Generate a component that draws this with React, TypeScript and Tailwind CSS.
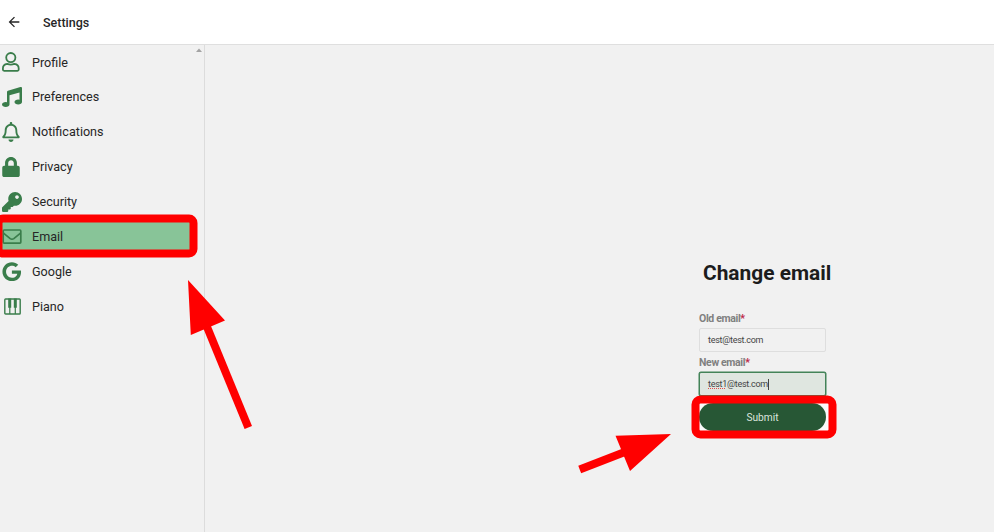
import React from "react";
import { FaMusic, FaRegBell, FaLock, FaKey, FaGoogle } from "react-icons/fa";
import { MdArrowBack } from "react-icons/md";

function User() {
  return (
    <svg width="20" height="20" viewBox="0 0 20 20" fill="none" stroke="currentColor" strokeWidth="1.8" strokeLinejoin="round">
      <circle cx="8.8" cy="5.6" r="4.6" />
      <path d="M5.2 11.9C2.6 12.2 0.9 14 0.9 16.5V17.6q0 1.2 1.2 1.2H15.5q1.2 0 1.2-1.2V16.5C16.7 14 15 12.2 12.4 11.9q-3.6 1.5-7.2 0z" />
    </svg>
  );
}

function Envelope() {
  return (
    <svg width="20" height="20" viewBox="0 0 20 20" fill="none" stroke="currentColor" strokeWidth="1.7" strokeLinejoin="round">
      <rect x="1.2" y="3" width="17.6" height="13.2" rx="0.9" />
      <path d="M1.5 6.2L8.2 11.6q1.8 1.3 3.6 0L18.5 6.2" />
    </svg>
  );
}

function Piano() {
  return (
    <svg width="20" height="20" viewBox="0 0 20 20" className="ml-[2px]">
      <rect x="0.8" y="2" width="15.4" height="15" rx="0.8" fill="none" stroke="currentColor" strokeWidth="1.4" />
      <path d="M4.2 1.5h3v9.3h-3zM9.8 1.5h3v9.3h-3z" fill="currentColor" />
      <path d="M5.8 10v7M11.3 10v7" stroke="currentColor" strokeWidth="1.2" />
    </svg>
  );
}

const items = [
  { label: "Profile", icon: <User /> },
  { label: "Preferences", icon: <FaMusic size={20} /> },
  { label: "Notifications", icon: <FaRegBell size={20} className="-ml-[1px]" /> },
  { label: "Privacy", icon: <FaLock size={20} className="-ml-[1px]" /> },
  { label: "Security", icon: <FaKey size={20} /> },
  { label: "Email", icon: <Envelope />, active: true },
  { label: "Google", icon: <FaGoogle size={19.5} /> },
  { label: "Piano", icon: <Piano /> },
];

function Label({ children }: { children: string }) {
  return (
    <label className="block h-[14px] whitespace-nowrap pt-px text-[10.5px] font-bold leading-[14px] tracking-[-0.35px] text-[#808080]">
      {children}
      <span className="text-[#bd2346]">*</span>
    </label>
  );
}

export default function App() {
  return (
    <div className="relative flex h-[532px] w-[994px] flex-col overflow-hidden bg-[#f1f1f1] font-[Roboto,sans-serif] text-[#262626]">
      <header className="flex h-[45px] shrink-0 items-center border-b border-[#dfdfdf] bg-white pl-[6px]">
        <MdArrowBack size={16} />
        <h1 className="ml-[21px] pt-[2px] text-[12.5px] font-medium">Settings</h1>
      </header>
      <div className="flex min-h-0 flex-1">
        <nav className="relative w-[205px] shrink-0 border-r border-[#dcdcdc]">
          {items.map((it) => (
            <div key={it.label} className="flex h-[34.95px] w-[190px] items-center">
              <div className={`flex h-[31px] w-full items-center pl-[2.4px] ${it.active ? "bg-[#88c498]" : ""}`}>
                <span className="-mt-px flex w-[29.6px] text-[#3a7d4b]">{it.icon}</span>
                <span className="pt-px text-[12.6px]">{it.label}</span>
              </div>
            </div>
          ))}
          <svg className="absolute right-[2px] top-[3px]" width="6" height="4" viewBox="0 0 6 4">
            <path d="M0 4L3 0.5l3 3.5z" fill="#a3a3a3" />
          </svg>
        </nav>
        <main className="flex-1 pl-[494px] pt-[215px]">
          <h2 className="ml-[4px] whitespace-nowrap pt-px text-[20.9px] font-bold leading-[25px] text-[#1c1c1c]">Change email</h2>
          <form className="mt-[25px] w-[127px]">
            <Label>Old email</Label>
            <div className="mt-[3px] flex h-[24px] items-center rounded-[2px] border border-[#dedede] pl-[8px] pt-px text-[9px] tracking-[-0.28px] text-[#444]">test@test.com</div>
            <div className="mt-[3px]"><Label>New email</Label></div>
            <div className="mt-[3px] flex h-[24px] items-center rounded-[2px] border border-[#438358] bg-[#dfe6e0] pl-[8px] pt-px text-[9px] tracking-[-0.28px] text-[#444] ring-[0.5px] ring-[#438358]">
              <span className="underline decoration-[#e34b4b] decoration-dotted decoration-[1px] underline-offset-[1px]">test1</span>
              <span>@test.com</span>
              <span className="h-[11px] w-px bg-[#444]" />
            </div>
            <div className="-mx-[3px] mt-[7px] bg-[#fafafa] px-[3px]">
              <button type="button" className="block h-[28px] w-full rounded-full bg-[#275735] pt-[2px] text-[10.2px] text-[#dce5de]">Submit</button>
            </div>
          </form>
        </main>
      </div>
      <svg className="pointer-events-none absolute inset-0" width="994" height="532" viewBox="0 0 994 532">
        <g fill="none" stroke="#f00" strokeWidth="8">
          <rect x="-1.5" y="218.5" width="195" height="35" rx="4.5" />
          <rect x="695.5" y="399.5" width="137" height="35" rx="5" />
          <path d="M205 322L248.3 427.5" />
          <path d="M579.7 469.5L630 450" />
        </g>
        <path fill="#f00" d="M188 280L225 320.5L190.8 335zM671 434L615.5 435.7L630 471z" />
      </svg>
    </div>
  );
}
